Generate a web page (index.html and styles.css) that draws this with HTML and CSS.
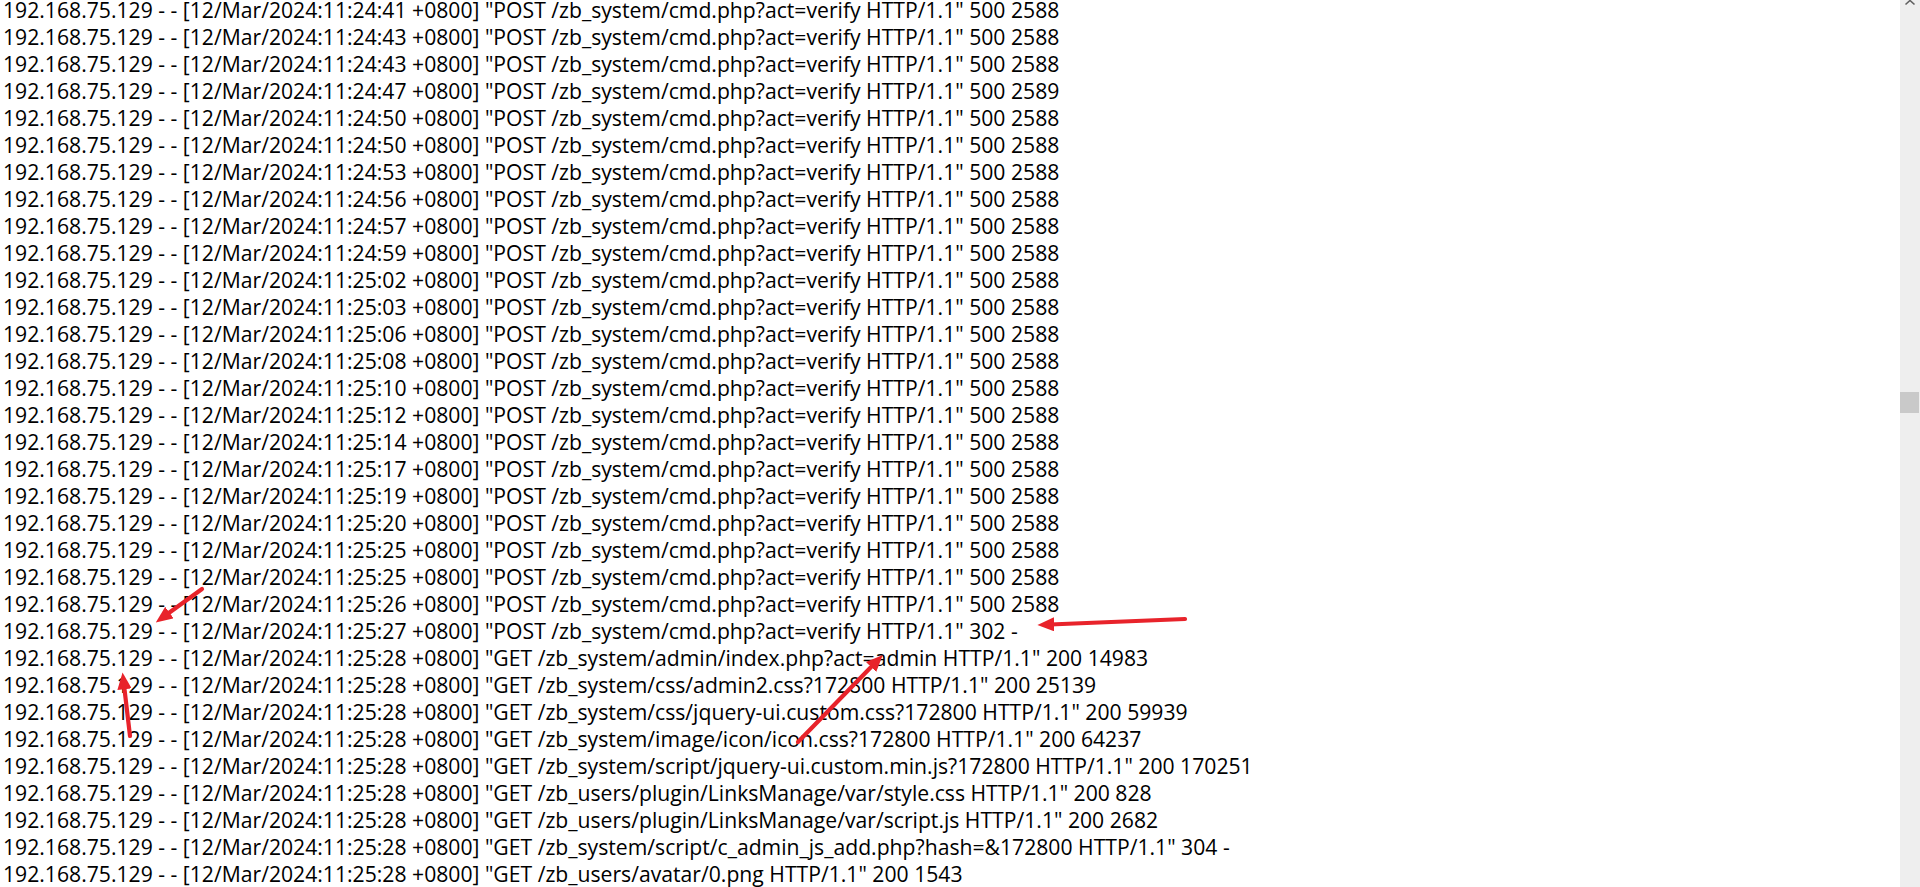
FILE: index.html
```html
<html>
  <head>
    <meta charset="UTF-8" />
    <title>access.log</title>
    <link rel="stylesheet" href="styles.css">
  </head>
  <body>
    <div class="editor">
      <div class="log">
        <div class="line">192.168.75.129 - - [12/Mar/2024:11:24:41 +0800] "POST /zb_system/cmd.php?act=verify HTTP/1.1" 500 2588</div>
        <div class="line">192.168.75.129 - - [12/Mar/2024:11:24:43 +0800] "POST /zb_system/cmd.php?act=verify HTTP/1.1" 500 2588</div>
        <div class="line">192.168.75.129 - - [12/Mar/2024:11:24:43 +0800] "POST /zb_system/cmd.php?act=verify HTTP/1.1" 500 2588</div>
        <div class="line">192.168.75.129 - - [12/Mar/2024:11:24:47 +0800] "POST /zb_system/cmd.php?act=verify HTTP/1.1" 500 2589</div>
        <div class="line">192.168.75.129 - - [12/Mar/2024:11:24:50 +0800] "POST /zb_system/cmd.php?act=verify HTTP/1.1" 500 2588</div>
        <div class="line">192.168.75.129 - - [12/Mar/2024:11:24:50 +0800] "POST /zb_system/cmd.php?act=verify HTTP/1.1" 500 2588</div>
        <div class="line">192.168.75.129 - - [12/Mar/2024:11:24:53 +0800] "POST /zb_system/cmd.php?act=verify HTTP/1.1" 500 2588</div>
        <div class="line">192.168.75.129 - - [12/Mar/2024:11:24:56 +0800] "POST /zb_system/cmd.php?act=verify HTTP/1.1" 500 2588</div>
        <div class="line">192.168.75.129 - - [12/Mar/2024:11:24:57 +0800] "POST /zb_system/cmd.php?act=verify HTTP/1.1" 500 2588</div>
        <div class="line">192.168.75.129 - - [12/Mar/2024:11:24:59 +0800] "POST /zb_system/cmd.php?act=verify HTTP/1.1" 500 2588</div>
        <div class="line">192.168.75.129 - - [12/Mar/2024:11:25:02 +0800] "POST /zb_system/cmd.php?act=verify HTTP/1.1" 500 2588</div>
        <div class="line">192.168.75.129 - - [12/Mar/2024:11:25:03 +0800] "POST /zb_system/cmd.php?act=verify HTTP/1.1" 500 2588</div>
        <div class="line">192.168.75.129 - - [12/Mar/2024:11:25:06 +0800] "POST /zb_system/cmd.php?act=verify HTTP/1.1" 500 2588</div>
        <div class="line">192.168.75.129 - - [12/Mar/2024:11:25:08 +0800] "POST /zb_system/cmd.php?act=verify HTTP/1.1" 500 2588</div>
        <div class="line">192.168.75.129 - - [12/Mar/2024:11:25:10 +0800] "POST /zb_system/cmd.php?act=verify HTTP/1.1" 500 2588</div>
        <div class="line">192.168.75.129 - - [12/Mar/2024:11:25:12 +0800] "POST /zb_system/cmd.php?act=verify HTTP/1.1" 500 2588</div>
        <div class="line">192.168.75.129 - - [12/Mar/2024:11:25:14 +0800] "POST /zb_system/cmd.php?act=verify HTTP/1.1" 500 2588</div>
        <div class="line">192.168.75.129 - - [12/Mar/2024:11:25:17 +0800] "POST /zb_system/cmd.php?act=verify HTTP/1.1" 500 2588</div>
        <div class="line">192.168.75.129 - - [12/Mar/2024:11:25:19 +0800] "POST /zb_system/cmd.php?act=verify HTTP/1.1" 500 2588</div>
        <div class="line">192.168.75.129 - - [12/Mar/2024:11:25:20 +0800] "POST /zb_system/cmd.php?act=verify HTTP/1.1" 500 2588</div>
        <div class="line">192.168.75.129 - - [12/Mar/2024:11:25:25 +0800] "POST /zb_system/cmd.php?act=verify HTTP/1.1" 500 2588</div>
        <div class="line">192.168.75.129 - - [12/Mar/2024:11:25:25 +0800] "POST /zb_system/cmd.php?act=verify HTTP/1.1" 500 2588</div>
        <div class="line">192.168.75.129 - - [12/Mar/2024:11:25:26 +0800] "POST /zb_system/cmd.php?act=verify HTTP/1.1" 500 2588</div>
        <div class="line">192.168.75.129 - - [12/Mar/2024:11:25:27 +0800] "POST /zb_system/cmd.php?act=verify HTTP/1.1" 302 -</div>
        <div class="line">192.168.75.129 - - [12/Mar/2024:11:25:28 +0800] "GET /zb_system/admin/index.php?act=admin HTTP/1.1" 200 14983</div>
        <div class="line">192.168.75.129 - - [12/Mar/2024:11:25:28 +0800] "GET /zb_system/css/admin2.css?172800 HTTP/1.1" 200 25139</div>
        <div class="line">192.168.75.129 - - [12/Mar/2024:11:25:28 +0800] "GET /zb_system/css/jquery-ui.custom.css?172800 HTTP/1.1" 200 59939</div>
        <div class="line">192.168.75.129 - - [12/Mar/2024:11:25:28 +0800] "GET /zb_system/image/icon/icon.css?172800 HTTP/1.1" 200 64237</div>
        <div class="line">192.168.75.129 - - [12/Mar/2024:11:25:28 +0800] "GET /zb_system/script/jquery-ui.custom.min.js?172800 HTTP/1.1" 200 170251</div>
        <div class="line">192.168.75.129 - - [12/Mar/2024:11:25:28 +0800] "GET /zb_users/plugin/LinksManage/var/style.css HTTP/1.1" 200 828</div>
        <div class="line">192.168.75.129 - - [12/Mar/2024:11:25:28 +0800] "GET /zb_users/plugin/LinksManage/var/script.js HTTP/1.1" 200 2682</div>
        <div class="line">192.168.75.129 - - [12/Mar/2024:11:25:28 +0800] "GET /zb_system/script/c_admin_js_add.php?hash=&amp;172800 HTTP/1.1" 304 -</div>
        <div class="line">192.168.75.129 - - [12/Mar/2024:11:25:28 +0800] "GET /zb_users/avatar/0.png HTTP/1.1" 200 1543</div>
      </div>

      <div class="scrollbar">
        <svg class="scroll-up" width="20" height="8" viewBox="0 0 20 8">
          <path d="M5.5 5.5 L10 1.5 L14.5 5.5" fill="none" stroke="#606060" stroke-width="1.6" />
        </svg>
        <div class="scroll-thumb"></div>
      </div>
    </div>

    <!-- 注釈の赤い矢印 -->
    <svg class="marks" width="1920" height="887" viewBox="0 0 1920 887">
      <defs>
        <marker id="head" markerWidth="4" markerHeight="3.4" refX="1" refY="1.7" orient="auto" markerUnits="strokeWidth">
          <path d="M0 0 L4 1.7 L0 3.4 Z" fill="#e8232b" />
        </marker>
      </defs>
      <g stroke="#e8232b" stroke-width="4.2" stroke-linecap="round" fill="none">
        <line x1="202" y1="589" x2="166" y2="615" marker-end="url(#head)" />
        <line x1="1185" y1="619" x2="1050" y2="624.5" marker-end="url(#head)" />
        <line x1="798" y1="742" x2="874" y2="664" marker-end="url(#head)" />
        <line x1="130" y1="736" x2="124" y2="685" marker-end="url(#head)" />
      </g>
    </svg>
  </body>
</html>
```
FILE: styles.css
```css
html,
body {
  height: 100%;
}
body {
  margin: 0;
  overflow: hidden;
  background: #fff;
  color: #000;
  font-family: "Open Sans", "Noto Sans CJK SC", sans-serif;
}

/* ログ本文 */
.editor {
  display: flex;
  height: 100%;
}
.log {
  flex: 1;
  display: flex;
  flex-direction: column;
  gap: 7px;
  padding-left: 3px;
  font-size: 21.17px;
  line-height: 20px;
}
.line {
  white-space: pre;
}

/* スクロールバー */
.scrollbar {
  width: 20px;
  background: #eeeeee;
}
.scroll-up {
  display: block;
  margin-top: -1px;
}
.scroll-thumb {
  width: 19px;
  height: 21px;
  margin-top: 385px;
  background: #c9c9c9;
}

/* 注釈 */
.marks {
  position: absolute;
  top: 0;
  left: 0;
  pointer-events: none;
}
```
